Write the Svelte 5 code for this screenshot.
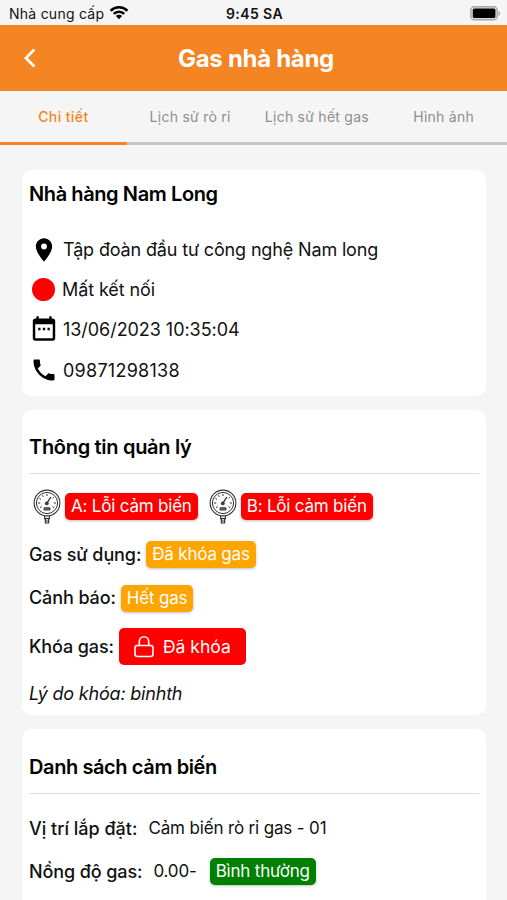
<script>
  const tabs = ['Chi tiết', 'Lịch sử rò rỉ', 'Lịch sử hết gas', 'Hình ảnh'];
  let active = $state(0);

  const restaurant = {
    name: 'Nhà hàng Nam Long',
    company: 'Tập đoàn đầu tư công nghệ Nam long',
    status: 'Mất kết nối',
    time: '13/06/2023 10:35:04',
    phone: '09871298138',
  };

  const gauges = ['A: Lỗi cảm biến', 'B: Lỗi cảm biến'];
</script>

{#snippet gaugeIcon()}
  <svg width="28" height="36" viewBox="0 0 28 36" fill="none" stroke="#333">
    <circle cx="14" cy="14" r="12.9" stroke-width="1.1" />
    <circle cx="14" cy="14" r="10.6" stroke-width="1" />
    <path d="M14 5v2M9.5 6.2l.8 1.7M6.3 9.4l1.7.9M20.8 8.2l-1.300 1.200M5 14h2.2M23 14h-2.2M7 18.6l1.700-1M21 18.6l-1.700-1" stroke-width="1" />
    <path d="M13.8 14.5l4-6.500" stroke-width="1.4" />
    <circle cx="13.8" cy="14.4" r="1.6" fill="#333" stroke-width="0.6" />
    <rect x="11" y="18.8" width="6" height="2.2" rx="0.8" fill="#777" stroke-width="1.1" />
    <path d="M11.6 27v2.6h4.8V27M12.400 29.8v4.200h3.200v-4.200M12.400 32h3.200" stroke-width="1.2" />
  </svg>
{/snippet}

<div class="screen">
  <div class="status-bar">
    <div class="carrier">
      <span>Nhà cung cấp</span>
      <svg width="20" height="15" viewBox="0 0 20 15" fill="none" stroke="#000" stroke-width="2.7">
        <path d="M1.6 5.7a12 12 0 0 1 16.8 0" />
        <path d="M4.8 8.9a7.4 7.4 0 0 1 10.4 0" />
        <path d="M10 14.2L6.9 11.1a4.4 4.4 0 0 1 6.2 0z" fill="#000" stroke="none" />
      </svg>
    </div>
    <span class="clock">9:45 SA</span>
    <svg class="battery" width="31" height="15" viewBox="0 0 31 15">
      <rect x="0.8" y="0.8" width="26.4" height="13" rx="3.6" fill="#dcdcdc" stroke="#a8a8a8" stroke-width="1.4" />
      <rect x="2.8" y="2.6" width="22.6" height="9.4" rx="1.6" fill="#000" />
      <path d="M28.4 5c2.2.6 2.2 4.2 0 4.8z" fill="#a8a8a8" />
    </svg>
  </div>

  <header>
    <svg class="back" width="14" height="22" viewBox="0 0 14 22" fill="none" stroke="#fff" stroke-width="2.8">
      <path d="M12.3 2.5L4 11l8.3 8.5" />
    </svg>
    <h1>Gas nhà hàng</h1>
  </header>

  <nav>
    {#each tabs as tab, i}
      <button class:active={active === i} onclick={() => (active = i)}>{tab}</button>
    {/each}
  </nav>

  <main>
    <section class="card info">
      <h2>{restaurant.name}</h2>
      <div class="info-row company">
        <svg width="28" height="28" viewBox="0 0 24 24"><path d="M12 2C8.13 2 5 5.13 5 9c0 5.25 7 13 7 13s7-7.75 7-13c0-3.87-3.13-7-7-7zm0 9.5a2.5 2.5 0 1 1 0-5 2.5 2.5 0 0 1 0 5z" /></svg>
        <span>{restaurant.company}</span>
      </div>
      <div class="info-row state">
        <span class="dot"></span>
        <span>{restaurant.status}</span>
      </div>
      <div class="info-row time">
        <svg width="28" height="28" viewBox="0 0 24 24"><path d="M7 11h2v2H7zm4 0h2v2h-2zm4 0h2v2h-2zM19.5 3h-1V1h-2v2h-9V1h-2v2h-1C3.300 3 2.400 3.900 2.400 5v15c0 1.100.9 2 2.100 2h15c1.200 0 2.100-.9 2.100-2V5c0-1.100-.9-2-2.100-2zm0 17h-15V8h15z" /></svg>
        <span>{restaurant.time}</span>
      </div>
      <div class="info-row phone">
        <svg width="28" height="28" viewBox="0 0 24 24"><path d="M6.62 10.79c1.44 2.83 3.76 5.14 6.59 6.59l2.2-2.2c.27-.27.67-.36 1.02-.24 1.12.37 2.33.57 3.57.57.55 0 1 .45 1 1V20c0 .55-.45 1-1 1-9.39 0-17-7.61-17-17 0-.55.45-1 1-1h3.5c.55 0 1 .45 1 1 0 1.25.2 2.45.57 3.57.11.35.03.74-.25 1.02z" /></svg>
        <span>{restaurant.phone}</span>
      </div>
    </section>

    <section class="card manage">
      <h2>Thông tin quản lý</h2>
      <div class="gauges">
        {#each gauges as gauge}
          <div class="gauge-item">
            {@render gaugeIcon()}
            <span class="badge red">{gauge}</span>
          </div>
        {/each}
      </div>
      <div class="field usage">
        <span class="label">Gas sử dụng:</span>
        <span class="badge orange">Đã khóa gas</span>
      </div>
      <div class="field warning">
        <span class="label">Cảnh báo:</span>
        <span class="badge orange">Hết gas</span>
      </div>
      <div class="field lock">
        <span class="label">Khóa gas:</span>
        <button class="lock-button">
          <svg width="20" height="23" viewBox="0 0 20 23" fill="none" stroke="#fff" stroke-width="1.6">
            <rect x="1" y="10.5" width="18" height="11" rx="2.5" />
            <path d="M5.3 10.500V6.500a4.700 4.700 0 0 1 9.400 0v4" />
          </svg>
          <span>Đã khóa</span>
        </button>
      </div>
      <p class="reason">Lý do khóa: binhth</p>
    </section>

    <section class="card sensors">
      <h2>Danh sách cảm biến</h2>
      <div class="field place">
        <span class="label">Vị trí lắp đặt:</span>
        <span class="value">Cảm biến rò rỉ gas - 01</span>
      </div>
      <div class="field level">
        <span class="label">Nồng độ gas:</span>
        <span class="value">0.00-</span>
        <span class="badge green">Bình thường</span>
      </div>
    </section>
  </main>
</div>

<style>
  :global(body) { margin: 0; background: #f5f5f5; overflow: hidden; }

  .screen {
    height: 900px;
    overflow: hidden;
    display: flex;
    flex-direction: column;
    font-family: Inter, "Liberation Sans", sans-serif;
    font-size: 18px;
    color: #111;
    background: #f5f5f5;
  }
  .screen span, h1, h2 { white-space: nowrap; }
  svg { display: block; flex-shrink: 0; }
  button { font-family: inherit; border: 0; margin: 0; padding: 0; }

  .status-bar {
    height: 25px;
    flex-shrink: 0;
    display: grid;
    grid-template-columns: 1fr auto 1fr;
    align-items: center;
    padding: 2px 6px 0 9px;
    box-sizing: border-box;
    font-size: 14px;
    letter-spacing: 0.25px;
  }
  .carrier { display: flex; align-items: center; gap: 5px; }
  .carrier svg { margin-top: -3px; }
  .clock { font-weight: 600; letter-spacing: 0.4px; margin-right: 1px; }
  .battery { justify-self: end; margin-top: -1px; }

  header {
    height: 66px;
    flex-shrink: 0;
    display: grid;
    grid-template-columns: 60px 1fr 60px;
    align-items: center;
    background: #f58423;
    color: #fff;
  }
  .back { margin-left: 22px; }
  h1 { margin: 0; padding-left: 5px; text-align: center; font-size: 24px; font-weight: 700; letter-spacing: -0.3px; }

  nav { height: 54px; flex-shrink: 0; display: flex; }
  nav button {
    flex: 1 1 0;
    background: none;
    border-bottom: 3px solid #c6c6c6;
    color: #8e8e8e;
    font-size: 14px;
    letter-spacing: 0.25px;
    white-space: nowrap;
  }
  nav button.active { color: #f58423; border-color: #f58423; font-weight: 500; letter-spacing: 0.4px; }

  main { display: flex; flex-direction: column; gap: 14px; padding: 25px 21px 0 22px; }

  .card {
    flex-shrink: 0;
    box-sizing: border-box;
    padding: 0 7px;
    background: #fff;
    border-radius: 10px;
  }
  .info { height: 226px; }
  .manage { height: 305px; }
  .sensors { height: 190px; }

  h2 { margin: 0; font-size: 20px; font-weight: 600; letter-spacing: -0.4px; color: #000; }
  .info h2 { height: 60px; line-height: 48px; }
  .manage h2, .sensors h2 { height: 64px; box-sizing: border-box; border-bottom: 1px solid #dedede; }
  .manage h2 { line-height: 75px; letter-spacing: -0.3px; }
  .sensors h2 { height: 65px; line-height: 76px; }

  .info-row { display: flex; align-items: center; height: 40px; gap: 5px; padding-left: 1px; }
  .company { height: 39px; letter-spacing: -0.15px; }
  .state { letter-spacing: -0.1px; }
  .time { letter-spacing: -0.05px; }
  .phone { height: 42px; letter-spacing: 0.25px; }
  .dot { width: 23px; height: 23px; margin: 0 2px; border-radius: 50%; background: #f00; }

  .badge {
    height: 27px;
    padding: 0 6px;
    border-radius: 5px;
    color: #fff;
    font-size: 17px;
    font-weight: 400;
    letter-spacing: -0.2px;
    line-height: 26px;
    box-sizing: border-box;
    box-shadow: 0 1px 3px rgba(0, 0, 0, 0.25);
  }
  .red { background: #f00; }
  .orange { background: #ffa500; }
  .green { background: #008000; }

  .gauges { display: flex; gap: 11px; height: 65px; padding-left: 4px; }
  .gauge-item { display: flex; align-items: center; gap: 4px; }

  .field { display: flex; align-items: center; gap: 5px; }
  .label { font-weight: 500; letter-spacing: -0.1px; }
  .usage { height: 31px; }
  .warning { height: 54px; }
  .warning .badge { margin-top: 2px; }
  .lock { height: 44px; }
  .lock-button {
    display: flex;
    align-items: center;
    justify-content: center;
    gap: 9px;
    width: 127px;
    height: 37px;
    border-radius: 5px;
    background: #f00;
    color: #fff;
    font-size: 17.5px;
    font-weight: 400;
  }
  .reason { margin: 0; height: 50px; line-height: 51px; font-style: italic; letter-spacing: -0.2px; }

  .place { height: 68px; gap: 11px; }
  .place .label { letter-spacing: 0; }
  .value { font-size: 17px; letter-spacing: -0.15px; }
  .level { height: 18px; }
  .level .value { margin: 0 8px 0 6px; }
</style>
